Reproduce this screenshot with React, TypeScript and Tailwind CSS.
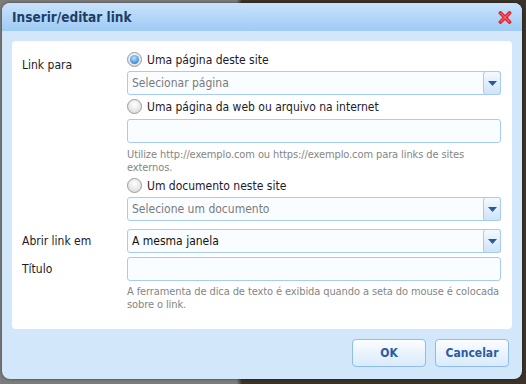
import React from 'react';

const font = { fontFamily: 'Tahoma, "DejaVu Sans Condensed", "DejaVu Sans", sans-serif' };

function Radio({ checked }: { checked?: boolean }) {
  return (
    <span className="flex h-[15px] w-[15px] shrink-0 items-center justify-center rounded-full border border-[#9a9a9a] bg-[radial-gradient(circle_at_50%_35%,#ffffff,#d4d4d4)]">
      {checked && (
        <span className="h-[9px] w-[9px] rounded-full bg-[radial-gradient(circle_at_45%_35%,#bfe2ff,#3a8ce0_70%,#1e64c0)]" />
      )}
    </span>
  );
}

function Select({ text, placeholder }: { text: string; placeholder?: boolean }) {
  return (
    <div className="flex h-[24px] items-stretch rounded-[3px] border border-[#a6ccf2] bg-[#fafdff]">
      <div className={`flex flex-1 items-center pl-[4px] text-[12px] ${placeholder ? 'text-[#7a7a7a]' : 'text-[#111]'}`}>
        {text}
      </div>
      <div className="m-[-1px] flex w-[18px] items-center justify-center rounded-[3px] border border-[#a6ccf2] bg-[linear-gradient(#f4f9ff,#cfe3f8)]">
        <svg width="9" height="5" viewBox="0 0 9 5">
          <path d="M0 0h9L4.5 5z" fill="#2a5a96" />
        </svg>
      </div>
    </div>
  );
}

function Input() {
  return <div className="h-[24px] rounded-[3px] border border-[#a6ccf2] bg-[#fafdff]" />;
}

function Option({ checked, label }: { checked?: boolean; label: string }) {
  return (
    <div className="flex h-[20px] items-center gap-[5px] text-[12px] text-[#1a1a2a]">
      <Radio checked={checked} />
      <span className="pt-[2px]">{label}</span>
    </div>
  );
}

export default function App() {
  return (
    <div
      className="h-[384px] w-[526px] overflow-hidden bg-[linear-gradient(90deg,#7c7c7c_0%,#7c7c7c_45%,#3b3329_46%,#3b3329_100%)] pl-[2px] pt-[3px]"
      style={font}
    >
      <div className="flex h-[376px] w-[520px] flex-col rounded-[8px] bg-[#d3e7fb] shadow-[0_0_3px_rgba(0,0,0,0.5)]">
        {/* title bar */}
        <div className="flex h-[28px] items-center justify-between rounded-t-[8px] bg-[linear-gradient(#c9e2fb,#9fcbf5)] pl-[10px] pr-[10px]">
          <span className="text-[13.5px] font-bold text-[#1d3f66]">Inserir/editar link</span>
          <svg width="14" height="13" viewBox="0 0 14 13">
            <path d="M2.5 2l9 9M11.5 2l-9 9" stroke="#e2262f" strokeWidth="3.8" strokeLinecap="round" />
            <path d="M2.8 2.3l8.4 8.4M11.2 2.3l-8.4 8.4" stroke="#ff7b82" strokeWidth="1" strokeLinecap="round" />
          </svg>
        </div>

        {/* content */}
        <div className="mx-[10px] mt-[10px] h-[288px] rounded-[4px] bg-white pl-[10px] pr-[11px] pt-[8px]">
          <div className="grid grid-cols-[105px_1fr] text-[12px] text-[#1a1a2a]">
            <div className="pt-[7px]">Link para</div>
            <div className="flex flex-col">
              <Option checked label="Uma página deste site" />
              <div className="mt-[2px]">
                <Select text="Selecionar página" placeholder />
              </div>
              <div className="mt-[1px]">
                <Option label="Uma página da web ou arquivo na internet" />
              </div>
              <div className="mt-[3px]">
                <Input />
              </div>
              <div className="mt-[5px] text-[11px] leading-[13px] tracking-[-0.1px] text-[#858585]">
                Utilize http://exemplo.com ou https://exemplo.com para links de sites externos.
              </div>
              <div className="mt-[1px]">
                <Option label="Um documento neste site" />
              </div>
              <div className="mt-[2px]">
                <Select text="Selecione um documento" placeholder />
              </div>
            </div>

            <div className="mt-[8px] flex items-center">Abrir link em</div>
            <div className="mt-[8px]">
              <Select text="A mesma janela" />
            </div>

            <div className="mt-[4px] flex h-[24px] items-center">Título</div>
            <div className="mt-[4px] flex flex-col gap-[4px]">
              <Input />
              <div className="text-[11px] leading-[13px] tracking-[-0.1px] text-[#858585]">
                A ferramenta de dica de texto é exibida quando a seta do mouse é colocada sobre o link.
              </div>
            </div>
          </div>
        </div>

        {/* buttons */}
        <div className="mt-[10px] flex justify-end gap-[9px] pr-[13px]">
          <button className="h-[28px] w-[74px] rounded-[4px] border border-[#8fbce8] bg-[linear-gradient(#fbfdff,#d9eafb)] text-[12px] font-bold text-[#2a5ca6]">
            OK
          </button>
          <button className="h-[28px] w-[74px] rounded-[4px] border border-[#8fbce8] bg-[linear-gradient(#fbfdff,#d9eafb)] text-[12px] font-bold text-[#2a5ca6]">
            Cancelar
          </button>
        </div>
      </div>
    </div>
  );
}
